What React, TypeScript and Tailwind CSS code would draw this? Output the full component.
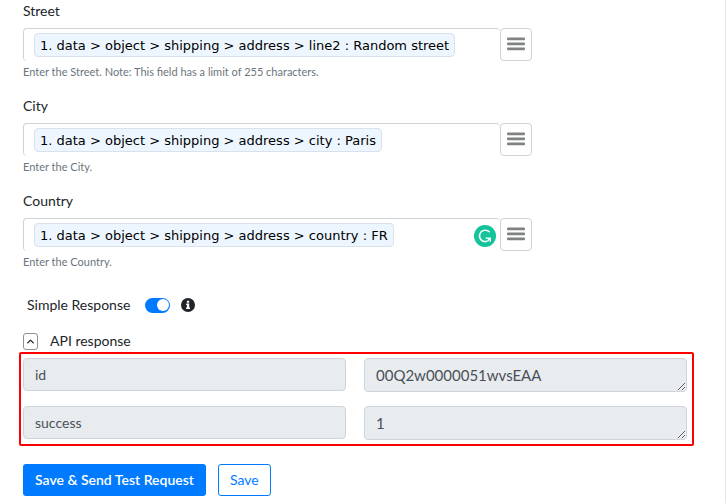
import React, { useState } from 'react';
import { ChevronUp } from 'lucide-react';

interface MappedField {
  id: string;
  label: string;
  value: string;
  hint: string;
  grammarly?: boolean;
}

const fields: MappedField[] = [
  {
    id: 'street',
    label: 'Street',
    value: '1. data > object > shipping > address > line2 : Random street',
    hint: 'Enter the Street. Note: This field has a limit of 255 characters.',
  },
  {
    id: 'city',
    label: 'City',
    value: '1. data > object > shipping > address > city : Paris',
    hint: 'Enter the City.',
  },
  {
    id: 'country',
    label: 'Country',
    value: '1. data > object > shipping > address > country : FR',
    hint: 'Enter the Country.',
    grammarly: true,
  },
];

const response = [
  { name: 'id', value: '00Q2w0000051wvsEAA' },
  { name: 'success', value: '1' },
];

const GrammarlyIcon = () => (
  <svg width="22" height="22" viewBox="0 0 22 22" fill="none" aria-hidden="true">
    <circle cx="11" cy="11" r="11" fill="#15c39a" />
    <path d="M15.2 6.8A5.7 5.7 0 1 0 12.6 16.4" stroke="#fff" strokeWidth="1.5" strokeLinecap="round" />
    <path d="M11.6 13.1H16.2V16.8M16 13.3L13.4 16.2" stroke="#fff" strokeWidth="1.4" />
  </svg>
);

const BarsIcon = () => (
  <svg width="18" height="14" viewBox="0 0 18 14" aria-hidden="true">
    <g fill="#808284">
      <rect y="0.5" width="18" height="2.8" rx="1" />
      <rect y="5.5" width="18" height="2.8" rx="1" />
      <rect y="10.5" width="18" height="2.8" rx="1" />
    </g>
  </svg>
);

const InfoIcon = () => (
  <svg width="14" height="14" viewBox="0 0 14 14" aria-hidden="true">
    <circle cx="7" cy="7" r="7" fill="#212529" />
    <path d="M5.9 2.7h2.3v2H5.9zM5.2 5.6h3v3.9h.8v1.4H5.1V9.5h.8V7h-.7z" fill="#fff" />
  </svg>
);

const FieldRow: React.FC<{ field: MappedField }> = ({ field }) => (
  <div className="h-[95px]">
    <label htmlFor={field.id} className="block pb-[7px] text-sm leading-5">
      {field.label}
    </label>
    <div className="flex h-[33px] max-w-[509px]">
      <div className="flex min-w-0 flex-1 items-center rounded border-t border-l border-[#ced4da] pl-2.5">
        <input
          id={field.id}
          readOnly
          value={field.value}
          className="field-sizing-content h-6 max-w-full rounded-sm border border-[#d9e2ec] bg-[#edf6ff] px-[5px] font-['DejaVu_Sans',sans-serif] text-[13px] text-black outline-none"
        />
        {field.grammarly && (
          <span className="mt-0.5 mr-1 ml-auto">
            <GrammarlyIcon />
          </span>
        )}
      </div>
      <button
        type="button"
        aria-label={`Map ${field.label}`}
        className="flex w-8 shrink-0 justify-center rounded border border-[#ced4da] pt-2"
      >
        <BarsIcon />
      </button>
    </div>
    <p className="pt-[3px] text-[11px] leading-4 text-[#6c757d]">{field.hint}</p>
  </div>
);

export default function App() {
  const [simple, setSimple] = useState(true);
  const [open, setOpen] = useState(true);

  return (
    <main className="min-h-screen border-r border-[#e3e8ee] bg-white pt-px pr-[37px] pl-[23px] font-[Lato,sans-serif] text-[#212529]">
      {fields.map((field) => (
        <FieldRow key={field.id} field={field} />
      ))}

      <div className="flex h-[38px] items-center pl-1 text-sm">
        <label htmlFor="simple-response">Simple Response</label>
        <input
          id="simple-response"
          type="checkbox"
          role="switch"
          checked={simple}
          onChange={(event) => setSimple(event.target.checked)}
          className="ml-[15px] flex h-[15px] w-[25px] appearance-none items-center rounded-full bg-[#adb5bd] px-px before:size-3 before:rounded-full before:bg-white checked:justify-end checked:bg-[#007bff]"
        />
        <button type="button" aria-label="About simple response" className="ml-[11px]">
          <InfoIcon />
        </button>
      </div>

      <div className="flex h-7 items-center gap-3 pt-1.5 text-sm">
        <button
          type="button"
          aria-label="Toggle API response"
          aria-expanded={open}
          onClick={() => setOpen(!open)}
          className="flex h-[17px] w-[15px] items-center justify-center rounded-[3px] border border-[#8b9299]"
        >
          <ChevronUp size={11} strokeWidth={3} className={open ? '' : 'rotate-180'} />
        </button>
        <h2>API response</h2>
      </div>

      {open && (
        <section className="-mr-1.5 -ml-1 grid gap-3.5 rounded-xs border-2 border-[#ff0000] py-1 pr-[5px] pl-0.5">
          {response.map((row) => (
            <div key={row.name} className="grid grid-cols-2 gap-[18px]">
              <input
                aria-label={`${row.name} key`}
                readOnly
                value={row.name}
                className="h-[33px] min-w-0 rounded border border-[#ced4da] bg-[#e9ecef] px-[11px] text-sm text-[#495057]"
              />
              <textarea
                aria-label={`${row.name} value`}
                readOnly
                rows={1}
                value={row.value}
                className="block h-[34px] min-w-0 resize overflow-hidden rounded border border-[#ced4da] bg-[#e9ecef] px-[11px] py-1.5 text-[15px] leading-5 text-[#495057]"
              />
            </div>
          ))}
        </section>
      )}

      <div className="flex gap-3 pt-[18px] text-sm">
        <button type="button" className="h-8 rounded-[3px] bg-[#007bff] px-3 font-semibold text-white">
          Save &amp; Send Test Request
        </button>
        <button type="button" className="h-8 rounded-[3px] border border-[#007bff] px-[11px] text-[#007bff]">
          Save
        </button>
      </div>
    </main>
  );
}
